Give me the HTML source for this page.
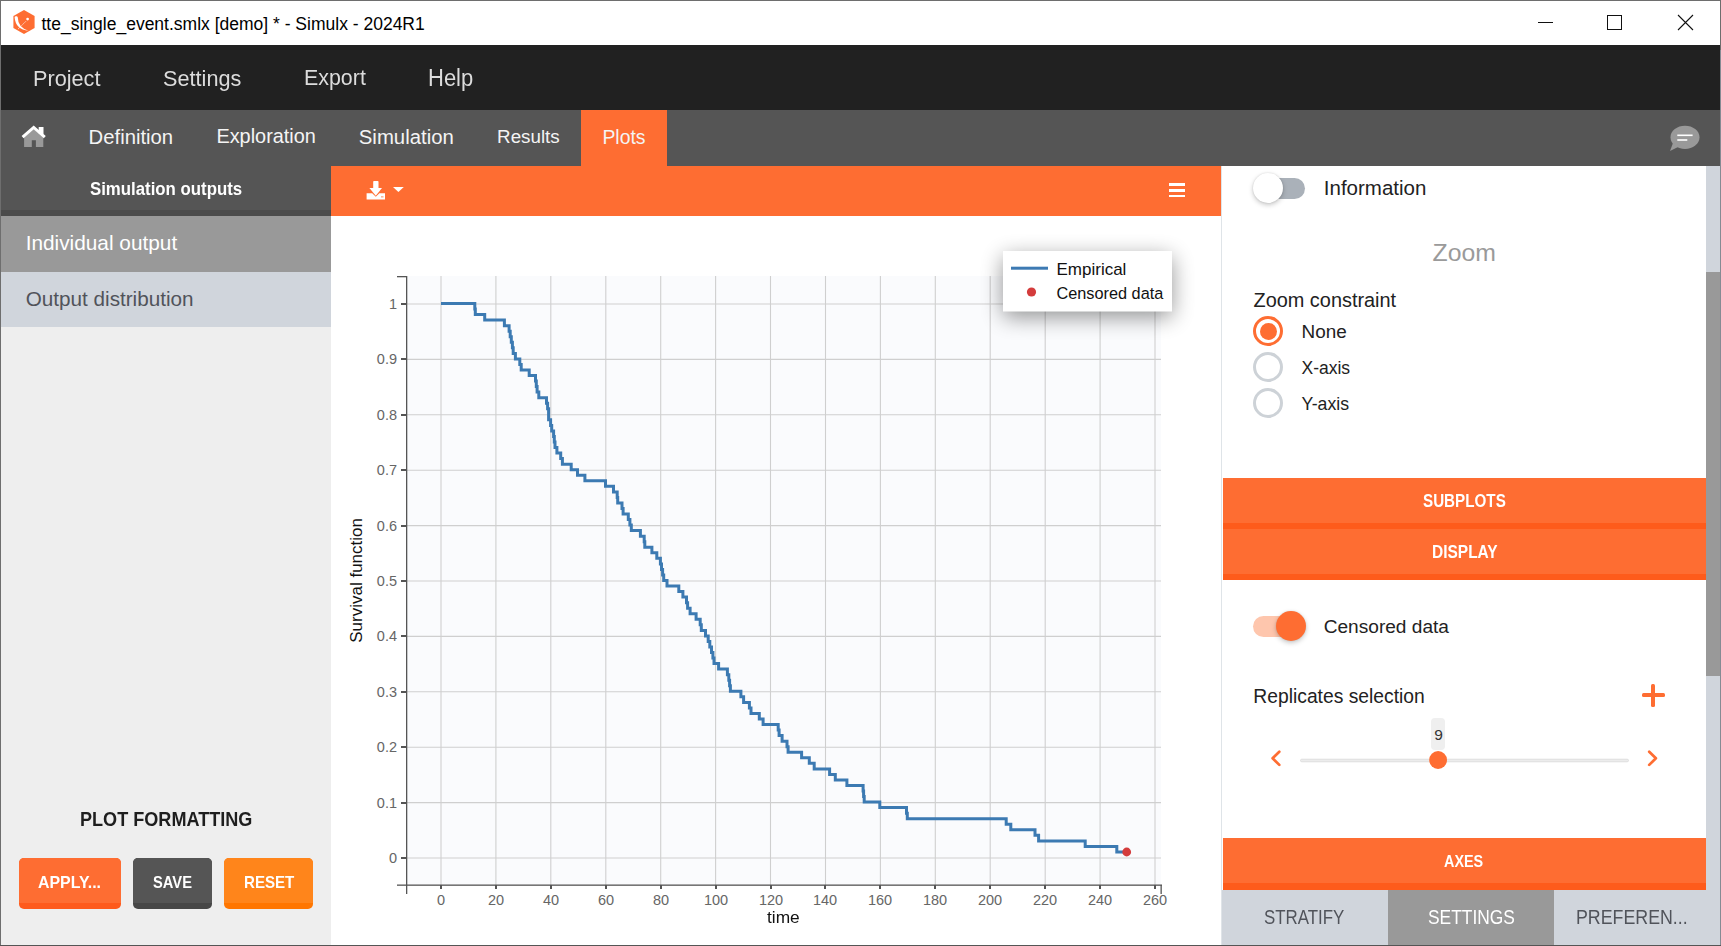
<!DOCTYPE html>
<html><head><meta charset="utf-8">
<style>
html,body{margin:0;padding:0;}
body{width:1721px;height:946px;overflow:hidden;position:relative;background:#fff;font-family:"Liberation Sans",sans-serif;}
.r{position:absolute;}
.t{position:absolute;line-height:1;white-space:nowrap;}
</style></head><body>
<!-- window frame -->
<div class="r" style="left:0;top:0;width:1721px;height:45px;background:#fff;"></div>
<div class="r" style="left:0;top:0;width:1721px;height:1px;background:#6e6e6e;"></div>
<div class="r" style="left:0;top:0;width:1px;height:946px;background:#6e6e6e;"></div>
<div class="r" style="left:1720px;top:0;width:1px;height:946px;background:#6e6e6e;"></div><div class="r" style="left:1720px;top:50px;width:1px;height:896px;background:#858b93;"></div>
<!-- logo -->
<svg class="r" style="left:0;top:0" width="60" height="45">
  <polygon points="24,10 34.6,16 34.6,28 24,34 13.4,28 13.4,16" fill="#fe6d32"/>
  <path d="M14.6 17.2 C15 15.8 17.6 15.8 17.8 17.6 Q17.9 27.6 28.6 30.8 Q15.6 29.6 14.6 17.2 Z" fill="#fff"/>
  <circle cx="27.6" cy="19.1" r="1.35" fill="#fff"/>
  <path d="M25.8 21.4 L17.8 29.3" stroke="#fff" stroke-width="0.8" stroke-dasharray="1.1 0.5" fill="none"/>
</svg>
<!-- window controls -->
<div class="r" style="left:1538px;top:22px;width:15px;height:1px;background:#111;"></div>
<div class="r" style="left:1607px;top:15px;width:13px;height:13px;border:1px solid #111;"></div>
<svg class="r" style="left:1670px;top:8px" width="30" height="30">
  <path d="M8 7 L23 22 M23 7 L8 22" stroke="#111" stroke-width="1.1"/>
</svg>
<!-- menu bar -->
<div class="r" style="left:1px;top:45px;width:1719px;height:65px;background:#212121;"></div>
<!-- tab bar -->
<div class="r" style="left:1px;top:110px;width:1719px;height:56px;background:#555555;"></div>
<div class="r" style="left:581px;top:110px;width:86px;height:56px;background:#fe6d32;"></div>
<!-- home icon -->
<svg class="r" style="left:15px;top:118px" width="40" height="35">
  <rect x="23.7" y="9" width="4.8" height="7" fill="#fff"/>
  <polygon points="9.1,19.5 18.7,11 28.3,19.5 28.3,28.9 20.9,28.9 20.9,22.2 16.8,22.2 16.8,28.9 9.1,28.9" fill="#999"/>
  <path d="M7.6 19.2 L18.7 9.4 L29.8 19.2" stroke="#fff" stroke-width="3" fill="none"/>
</svg>
<!-- chat icon -->
<svg class="r" style="left:1660px;top:118px" width="50" height="40">
  <ellipse cx="25" cy="19.3" rx="14.5" ry="11.6" fill="#999"/>
  <path d="M13 25 L10 33 L20 28 Z" fill="#999"/>
  <rect x="17.3" y="16.5" width="15.3" height="1.6" fill="#fff"/>
  <rect x="17.3" y="21.2" width="10" height="1.6" fill="#fff"/>
</svg>
<!-- left panel -->
<div class="r" style="left:1px;top:166px;width:330px;height:780px;background:#eeeeee;"></div>
<div class="r" style="left:1px;top:166px;width:330px;height:44px;background:#555555;"></div>
<div class="r" style="left:1px;top:210px;width:330px;height:6px;background:#4b4b4b;"></div>
<div class="r" style="left:1px;top:216px;width:330px;height:56px;background:#999999;"></div>
<div class="r" style="left:1px;top:272px;width:330px;height:55px;background:#d0d5dc;"></div>
<!-- buttons -->
<div class="r" style="left:19px;top:858px;width:102px;height:51px;border-radius:5px;background:#fe5a1c;overflow:hidden;"><div style="height:45px;background:#fe6d32;"></div></div>
<div class="r" style="left:133px;top:858px;width:79px;height:51px;border-radius:5px;background:#474747;overflow:hidden;"><div style="height:45px;background:#555555;"></div></div>
<div class="r" style="left:224px;top:858px;width:89px;height:51px;border-radius:5px;background:#ff7600;overflow:hidden;"><div style="height:45px;background:#ff851b;"></div></div>
<!-- chart area -->
<div class="r" style="left:331px;top:166px;width:890px;height:50px;background:#fe6d32;"></div>
<div class="r" style="left:1221px;top:166px;width:1px;height:780px;background:#dfe4e8;"></div>
<!-- download icon -->
<svg class="r" style="left:360px;top:176px" width="50" height="30">
  <rect x="13.2" y="5" width="5.3" height="8" rx="0.8" fill="#fff"/>
  <polygon points="9.4,12 22,12 15.8,19.8" fill="#fff"/>
  <path d="M6.6 17.2 H12.2 L15.8 20.8 L19.4 17.2 H25 V23.4 H6.6 Z" fill="#fff"/>
  <rect x="21" y="20.5" width="2.5" height="0.8" fill="#fe6d32"/>
  <polygon points="33,10.9 43.8,10.9 38.4,16" fill="#fff"/>
</svg>
<!-- hamburger -->
<div class="r" style="left:1169px;top:183px;width:16px;height:2.5px;background:#fff;"></div>
<div class="r" style="left:1169px;top:189px;width:16px;height:2.5px;background:#fff;"></div>
<div class="r" style="left:1169px;top:194.5px;width:16px;height:2.5px;background:#fff;"></div>

<!-- chart svg -->
<svg class="r" style="left:0;top:0" width="1721" height="946">
  <rect x="407" y="276" width="754" height="609" fill="#fafbfd"/>
  <g stroke="#cfcfcf" stroke-width="1.1">
<line x1="441.0" y1="276" x2="441.0" y2="885"/>
<line x1="495.9" y1="276" x2="495.9" y2="885"/>
<line x1="550.8" y1="276" x2="550.8" y2="885"/>
<line x1="605.8" y1="276" x2="605.8" y2="885"/>
<line x1="660.7" y1="276" x2="660.7" y2="885"/>
<line x1="715.6" y1="276" x2="715.6" y2="885"/>
<line x1="770.5" y1="276" x2="770.5" y2="885"/>
<line x1="825.5" y1="276" x2="825.5" y2="885"/>
<line x1="880.4" y1="276" x2="880.4" y2="885"/>
<line x1="935.3" y1="276" x2="935.3" y2="885"/>
<line x1="990.2" y1="276" x2="990.2" y2="885"/>
<line x1="1045.2" y1="276" x2="1045.2" y2="885"/>
<line x1="1100.1" y1="276" x2="1100.1" y2="885"/>
<line x1="1155.0" y1="276" x2="1155.0" y2="885"/>
<line x1="407" y1="858.0" x2="1161" y2="858.0"/>
<line x1="407" y1="802.6" x2="1161" y2="802.6"/>
<line x1="407" y1="747.2" x2="1161" y2="747.2"/>
<line x1="407" y1="691.8" x2="1161" y2="691.8"/>
<line x1="407" y1="636.4" x2="1161" y2="636.4"/>
<line x1="407" y1="581.0" x2="1161" y2="581.0"/>
<line x1="407" y1="525.6" x2="1161" y2="525.6"/>
<line x1="407" y1="470.2" x2="1161" y2="470.2"/>
<line x1="407" y1="414.8" x2="1161" y2="414.8"/>
<line x1="407" y1="359.4" x2="1161" y2="359.4"/>
<line x1="407" y1="304.0" x2="1161" y2="304.0"/>
  </g>
  <g fill="#555">
  <rect x="406" y="276" width="1.3" height="618"/>
  <rect x="397" y="276" width="10" height="1.3"/>
  <rect x="397" y="884.5" width="765" height="1.3"/>
  <rect x="1160.5" y="885" width="1.3" height="9"/>
<rect x="440" y="885" width="2" height="4"/>
<rect x="495" y="885" width="2" height="4"/>
<rect x="550" y="885" width="2" height="4"/>
<rect x="605" y="885" width="2" height="4"/>
<rect x="660" y="885" width="2" height="4"/>
<rect x="715" y="885" width="2" height="4"/>
<rect x="770" y="885" width="2" height="4"/>
<rect x="824" y="885" width="2" height="4"/>
<rect x="879" y="885" width="2" height="4"/>
<rect x="934" y="885" width="2" height="4"/>
<rect x="989" y="885" width="2" height="4"/>
<rect x="1044" y="885" width="2" height="4"/>
<rect x="1099" y="885" width="2" height="4"/>
<rect x="1154" y="885" width="2" height="4"/>
<rect x="401" y="857" width="6" height="2"/>
<rect x="401" y="802" width="6" height="2"/>
<rect x="401" y="746" width="6" height="2"/>
<rect x="401" y="691" width="6" height="2"/>
<rect x="401" y="635" width="6" height="2"/>
<rect x="401" y="580" width="6" height="2"/>
<rect x="401" y="525" width="6" height="2"/>
<rect x="401" y="469" width="6" height="2"/>
<rect x="401" y="414" width="6" height="2"/>
<rect x="401" y="358" width="6" height="2"/>
<rect x="401" y="303" width="6" height="2"/>
  </g>
  <g font-family="Liberation Sans" font-size="14.5" fill="#666" text-anchor="middle">
<text x="441" y="905">0</text>
<text x="496" y="905">20</text>
<text x="551" y="905">40</text>
<text x="606" y="905">60</text>
<text x="661" y="905">80</text>
<text x="716" y="905">100</text>
<text x="771" y="905">120</text>
<text x="825" y="905">140</text>
<text x="880" y="905">160</text>
<text x="935" y="905">180</text>
<text x="990" y="905">200</text>
<text x="1045" y="905">220</text>
<text x="1100" y="905">240</text>
<text x="1155" y="905">260</text>
  </g>
  <g font-family="Liberation Sans" font-size="14.5" fill="#666" text-anchor="end">
<text x="397" y="863">0</text>
<text x="397" y="808">0.1</text>
<text x="397" y="752">0.2</text>
<text x="397" y="697">0.3</text>
<text x="397" y="641">0.4</text>
<text x="397" y="586">0.5</text>
<text x="397" y="531">0.6</text>
<text x="397" y="475">0.7</text>
<text x="397" y="420">0.8</text>
<text x="397" y="364">0.9</text>
<text x="397" y="309">1</text>
  </g>
  <text x="0" y="0" font-family="Liberation Sans" font-size="17" fill="#111" text-anchor="middle" transform="translate(361.5 580.4) rotate(-90)">Survival function</text>
  <path d="M441.0 303.5H474.8V309.0H475.3V314.6H484.7V320.1H504.4V325.7H509.1V331.2H510.2V336.7H511.3V342.3H512.4V347.8H513.2V353.4H515.4V358.9H519.8V364.4H521.2V370.0H529.2V375.5H535.5V381.1H536.3V386.6H537.1V392.1H538.8V397.7H546.5V403.2H547.6V408.8H548.6V414.3H548.6V419.8H550.6V425.4H551.7V430.9H553.6V436.5H554.3V442.0H555.0V447.5H556.9V453.1H560.7V458.6H562.4V464.2H571.2V469.7H577.5V475.2H584.9V480.8H605.5V486.3H613.5V491.9H617.2V497.4H617.7V502.9H622.0V508.5H623.1V514.0H628.3V519.6H629.9V525.1H631.3V530.6H640.4V536.2H644.2V541.7H644.8V547.3H651.9V552.8H656.8V558.3H660.4V563.9H661.5V569.4H662.6V575.0H663.7V580.5H667.0V586.0H678.8V591.6H682.9V597.1H686.5V602.7H687.6V608.2H690.1V613.7H696.1V619.3H700.2V624.8H701.3V630.4H705.5V635.9H708.2V641.4H709.8V647.0H711.5V652.5H712.9V658.1H714.0V663.6H718.6V669.1H727.4V674.7H728.8V680.2H729.6V685.8H730.4V691.3H740.9V696.8H743.6V702.4H749.4V707.9H751.0V713.5H759.3V719.0H763.1V724.5H778.2V730.1H779.1V735.6H782.1V741.2H787.0V746.7H788.1V752.2H801.6V757.8H809.3V763.3H814.2V768.9H829.6V774.4H835.3V779.9H846.9V785.5H863.1V791.0H863.6V796.6H864.2V802.1H879.8V807.6H906.5V813.2H907.3V818.7H1006.2V824.3H1010.8V829.8H1035.0V835.3H1038.6V840.9H1085.2V846.4H1116.8V852.0H1126.7" stroke="#3c7ab2" stroke-width="3" fill="none" stroke-linejoin="miter"/>
  <circle cx="1126.7" cy="852.0" r="4.4" fill="#d43c3c"/>
  <defs><filter id="sh" x="-60%" y="-150%" width="220%" height="400%"><feGaussianBlur stdDeviation="11"/></filter></defs>
  <rect x="1003" y="257" width="169" height="60" fill="#000" opacity="0.42" filter="url(#sh)"/>
  <rect x="1003" y="251" width="169" height="60.5" fill="#fff"/>
  <rect x="1011" y="266.7" width="37" height="3" fill="#3d7ab3"/>
  <circle cx="1031.5" cy="292" r="4.6" fill="#d43c3c"/>
</svg>

<!-- right panel -->
<div class="r" style="left:1222px;top:166px;width:484px;height:724px;background:#fff;"></div>
<!-- scrollbar -->
<div class="r" style="left:1706px;top:166px;width:14px;height:780px;background:#d0d5dc;"></div>
<div class="r" style="left:1706px;top:272px;width:14px;height:404px;background:#999999;"></div>
<!-- info toggle -->
<div class="r" style="left:1254px;top:178px;width:51px;height:21px;border-radius:11px;background:#aab1b9;"></div>
<div class="r" style="left:1253px;top:173px;width:30px;height:30px;border-radius:50%;background:#fff;box-shadow:0 2px 5px rgba(0,0,0,0.22),0 0 2px rgba(0,0,0,0.12);"></div>
<!-- radios -->
<div class="r" style="left:1253px;top:316px;width:24px;height:24px;border-radius:50%;border:3px solid #fe6d32;"></div>
<div class="r" style="left:1259.5px;top:322.5px;width:17px;height:17px;border-radius:50%;background:#fe6d32;"></div>
<div class="r" style="left:1253px;top:352px;width:24px;height:24px;border-radius:50%;border:3px solid #cdd2d7;"></div>
<div class="r" style="left:1253px;top:388px;width:24px;height:24px;border-radius:50%;border:3px solid #cdd2d7;"></div>
<!-- subplots / display -->
<div class="r" style="left:1223px;top:478px;width:483px;height:45px;background:#fe6d32;"></div>
<div class="r" style="left:1223px;top:523px;width:483px;height:6px;background:#fe5b1b;"></div>
<div class="r" style="left:1223px;top:529px;width:483px;height:45px;background:#fe6d32;"></div>
<div class="r" style="left:1223px;top:574px;width:483px;height:6px;background:#fe5b1b;"></div>
<!-- censored toggle -->
<div class="r" style="left:1253px;top:616px;width:51px;height:21px;border-radius:11px;background:#fec6ad;"></div>
<div class="r" style="left:1275.5px;top:611px;width:30px;height:30px;border-radius:50%;background:#fe6d32;box-shadow:0 2px 5px rgba(0,0,0,0.22),0 0 2px rgba(0,0,0,0.1);"></div>
<!-- plus -->
<div class="r" style="left:1642px;top:693px;width:22.5px;height:4.4px;border-radius:1.5px;background:#fe6d32;"></div>
<div class="r" style="left:1651px;top:684px;width:4.4px;height:22.5px;border-radius:1.5px;background:#fe6d32;"></div>
<!-- slider -->
<svg class="r" style="left:1260px;top:740px" width="410" height="35">
  <path d="M19.3 11.7 L12.6 18.3 L19.3 24.9" stroke="#fe6d32" stroke-width="2.7" fill="none" stroke-linecap="round" stroke-linejoin="round"/>
  <path d="M389.2 11.7 L395.9 18.3 L389.2 24.9" stroke="#fe6d32" stroke-width="2.7" fill="none" stroke-linecap="round" stroke-linejoin="round"/>
  <rect x="40.5" y="19.2" width="328" height="2.6" rx="1.3" fill="#ececec" stroke="#d9d9d9" stroke-width="0.8"/>
  <circle cx="178.1" cy="20" r="8.9" fill="#fe6d32"/>
</svg>
<div class="r" style="left:1431px;top:718px;width:14px;height:31.5px;border-radius:4px;background:#efefef;"></div>
<div class="t" style="left:1434.3px;top:726.5px;font-size:15.5px;color:#333;">9</div>
<!-- axes bar -->
<div class="r" style="left:1223px;top:838px;width:483px;height:45px;background:#fe6d32;"></div>
<div class="r" style="left:1223px;top:883px;width:483px;height:7px;background:#fe5b1b;"></div>
<!-- bottom tabs -->
<div class="r" style="left:1222px;top:890px;width:166px;height:56px;background:#d0d5dc;"></div>
<div class="r" style="left:1388px;top:890px;width:166px;height:56px;background:#999999;"></div>
<div class="r" style="left:1554px;top:890px;width:166px;height:56px;background:#d0d5dc;"></div>
<!-- bottom edge -->
<div class="r" style="left:0;top:945px;width:1721px;height:1px;background:#555;"></div>

<div class="t " style="left:41.5px;top:16.19px;font-size:17.5px;color:#000;font-weight:normal;">tte_single_event.smlx [demo] * - Simulx - 2024R1</div>
<div class="t " style="left:33.4px;top:67.01px;font-size:22.785px;color:#dcdcdc;font-weight:normal;transform:scaleX(0.9524);transform-origin:0 0;">Project</div>
<div class="t " style="left:162.7px;top:67.01px;font-size:22.785px;color:#dcdcdc;font-weight:normal;transform:scaleX(0.9524);transform-origin:0 0;">Settings</div>
<div class="t " style="left:304.2px;top:67.28px;font-size:22.47px;color:#dcdcdc;font-weight:normal;transform:scaleX(0.9524);transform-origin:0 0;">Export</div>
<div class="t " style="left:427.7px;top:66.75px;font-size:23.1px;color:#dcdcdc;font-weight:normal;transform:scaleX(0.9524);transform-origin:0 0;">Help</div>
<div class="t " style="left:88.6px;top:126.82px;font-size:20.3px;color:#f4f4f4;font-weight:normal;">Definition</div>
<div class="t " style="left:216.4px;top:127.15px;font-size:19.9px;color:#f4f4f4;font-weight:normal;">Exploration</div>
<div class="t " style="left:358.8px;top:126.77px;font-size:20.35px;color:#f4f4f4;font-weight:normal;">Simulation</div>
<div class="t " style="left:497.1px;top:128.09px;font-size:18.8px;color:#f4f4f4;font-weight:normal;">Results</div>
<div class="t " style="left:602.4px;top:127.58px;font-size:19.4px;color:#f4f4f4;font-weight:normal;">Plots</div>
<div class="t " style="left:90.0px;top:178.52px;font-size:19.0px;color:#fff;font-weight:bold;transform:scaleX(0.8842);transform-origin:0 0;">Simulation outputs</div>
<div class="t " style="left:25.7px;top:233.19px;font-size:20.8px;color:#fff;font-weight:normal;">Individual output</div>
<div class="t " style="left:25.7px;top:289.38px;font-size:20.7px;color:#50535a;font-weight:normal;">Output distribution</div>
<div class="t " style="left:80.0px;top:809.66px;font-size:19.3px;color:#1e1e1e;font-weight:bold;transform:scaleX(0.9378);transform-origin:0 0;">PLOT FORMATTING</div>
<div class="t " style="left:37.5px;top:873.61px;font-size:17.0px;color:#fff;font-weight:bold;transform:scaleX(0.9353);transform-origin:0 0;">APPLY...</div>
<div class="t " style="left:152.7px;top:873.61px;font-size:17.0px;color:#fff;font-weight:bold;transform:scaleX(0.8647);transform-origin:0 0;">SAVE</div>
<div class="t " style="left:243.6px;top:873.61px;font-size:17.0px;color:#fff;font-weight:bold;transform:scaleX(0.8882);transform-origin:0 0;">RESET</div>
<div class="t " style="left:1323.8px;top:177.85px;font-size:20.5px;color:#222;font-weight:normal;">Information</div>
<div class="t " style="left:1432.5px;top:241.01px;font-size:24.8px;color:#9a9a9a;font-weight:normal;">Zoom</div>
<div class="t " style="left:1253.5px;top:291.35px;font-size:19.9px;color:#222;font-weight:normal;">Zoom constraint</div>
<div class="t " style="left:1301.5px;top:323.00px;font-size:18.9px;color:#222;font-weight:normal;">None</div>
<div class="t " style="left:1301.5px;top:360.19px;font-size:17.5px;color:#222;font-weight:normal;">X-axis</div>
<div class="t " style="left:1301.5px;top:396.02px;font-size:17.7px;color:#222;font-weight:normal;">Y-axis</div>
<div class="t " style="left:1422.8px;top:493.19px;font-size:17.5px;color:#fff;font-weight:bold;transform:scaleX(0.8686);transform-origin:0 0;">SUBPLOTS</div>
<div class="t " style="left:1431.9px;top:544.02px;font-size:17.7px;color:#fff;font-weight:bold;transform:scaleX(0.8757);transform-origin:0 0;">DISPLAY</div>
<div class="t " style="left:1323.7px;top:617.13px;font-size:19.1px;color:#222;font-weight:normal;">Censored data</div>
<div class="t " style="left:1253.3px;top:686.96px;font-size:19.3px;color:#222;font-weight:normal;">Replicates selection</div>
<div class="t " style="left:1444.2px;top:853.78px;font-size:16.8px;color:#fff;font-weight:bold;transform:scaleX(0.8571);transform-origin:0 0;">AXES</div>
<div class="t " style="left:1264.3px;top:908.24px;font-size:19.8px;color:#50535a;font-weight:normal;transform:scaleX(0.8535);transform-origin:0 0;">STRATIFY</div>
<div class="t " style="left:1427.6px;top:908.24px;font-size:19.8px;color:#fff;font-weight:normal;transform:scaleX(0.8788);transform-origin:0 0;">SETTINGS</div>
<div class="t " style="left:1575.7px;top:908.24px;font-size:19.8px;color:#50535a;font-weight:normal;transform:scaleX(0.8990);transform-origin:0 0;">PREFEREN...</div>
<div class="t " style="left:1056.5px;top:261.31px;font-size:17.0px;color:#111;font-weight:normal;">Empirical</div>
<div class="t " style="left:1056.5px;top:284.90px;font-size:16.3px;color:#111;font-weight:normal;">Censored data</div>
<div class="t " style="left:767.2px;top:909.29px;font-size:16.2px;color:#111;font-weight:normal;transform:scaleX(1.0700);transform-origin:0 0;">time</div>
</body></html>
